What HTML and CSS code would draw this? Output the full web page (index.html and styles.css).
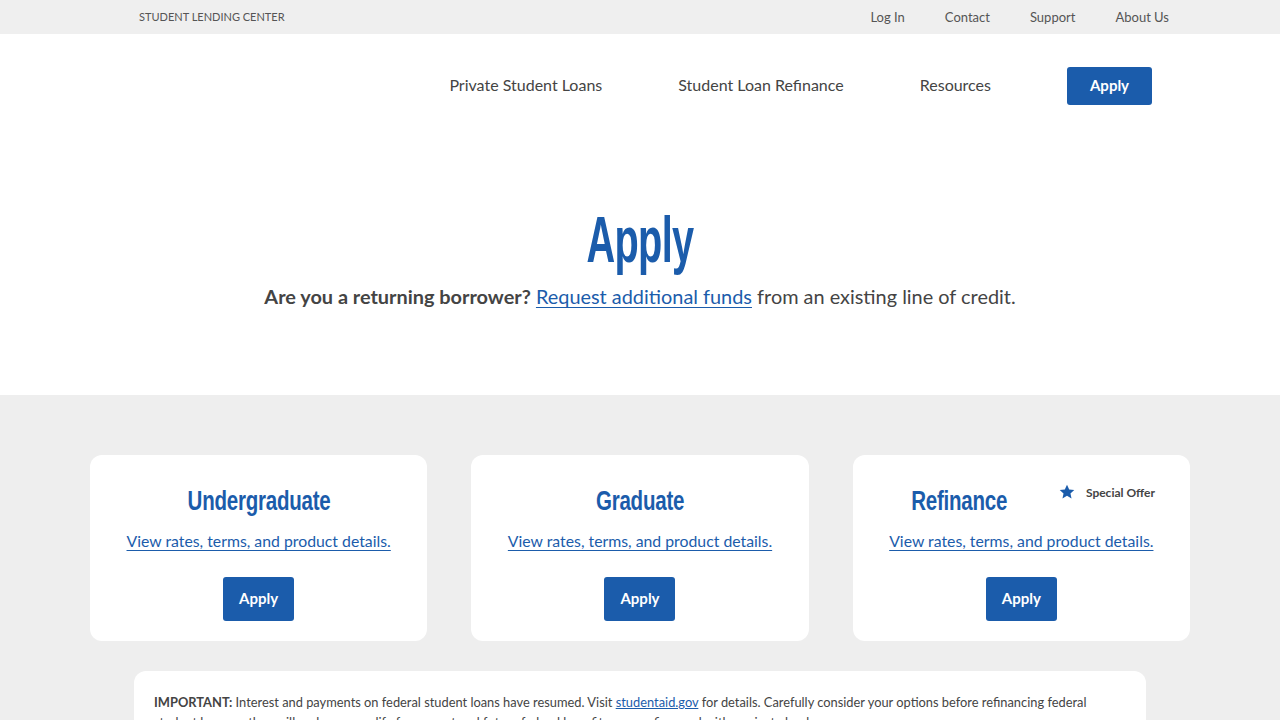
FILE: index.html
```html
<!DOCTYPE html>
<html lang="en">
<head>
<meta charset="utf-8">
<title>Apply | Student Lending Center</title>
<link rel="stylesheet" href="styles.css">
</head>
<body>
<div class="topbar">
  <div class="topbar-inner">
    <span class="brand">STUDENT LENDING CENTER</span>
    <nav class="util">
      <a href="#">Log In</a>
      <a href="#">Contact</a>
      <a href="#">Support</a>
      <a href="#">About Us</a>
    </nav>
  </div>
</div>
<header class="mainnav">
  <nav class="mainnav-inner">
    <a class="navlink" href="#">Private Student Loans</a>
    <a class="navlink" href="#">Student Loan Refinance</a>
    <a class="navlink" href="#">Resources</a>
    <a class="btn btn-nav" href="#">Apply</a>
  </nav>
</header>
<section class="hero">
  <h1>Apply</h1>
  <p class="sub"><strong>Are you a returning borrower?</strong> <a href="#">Request additional funds</a> from an existing line of credit.</p>
</section>
<section class="products">
  <div class="cards">
    <div class="card">
      <h2>Undergraduate</h2>
      <a class="details" href="#">View rates, terms, and product details.</a>
      <a class="btn btn-card" href="#">Apply</a>
    </div>
    <div class="card">
      <h2>Graduate</h2>
      <a class="details" href="#">View rates, terms, and product details.</a>
      <a class="btn btn-card" href="#">Apply</a>
    </div>
    <div class="card">
      <span class="offer"><svg class="star" viewBox="0 0 24 24" width="16" height="16"><path d="M12 1.2l3.3 7 7.6.8-5.7 5.2 1.6 7.5L12 17.8l-6.8 3.9 1.6-7.5L1.1 9l7.6-.8z" fill="#1b5cab"/></svg>Special Offer</span>
      <h2 class="shift">Refinance</h2>
      <a class="details" href="#">View rates, terms, and product details.</a>
      <a class="btn btn-card" href="#">Apply</a>
    </div>
  </div>
  <div class="notice">
    <p><strong>IMPORTANT:</strong> Interest and payments on federal student loans have resumed. Visit <a href="#">studentaid.gov</a> for details. Carefully consider your options before refinancing federal student loans as they will no longer qualify for current and future federal benefits once refinanced with a private lender.</p>
  </div>
</section>
</body>
</html>
```
FILE: styles.css
```css
* { box-sizing: border-box; }
html, body { margin: 0; padding: 0; }
body {
  font-family: "Lato", "Open Sans", sans-serif;
  color: #444;
  background: #fff;
}
a { color: inherit; text-decoration: none; }

.topbar { background: #efefef; height: 34px; }
.topbar-inner {
  height: 34px;
  padding: 0 111px 0 139px;
  display: flex;
  align-items: center;
  justify-content: space-between;
}
.brand { font-size: 11px; color: #555; margin-top: -2px; }
.util { display: flex; gap: 40px; }
.util a { font-size: 13px; color: #555; }

.mainnav { height: 104px; }
.mainnav-inner {
  display: flex;
  justify-content: flex-end;
  align-items: center;
  padding: 33px 128px 0 0;
}
.navlink { font-size: 16px; color: #444; margin-right: 76px; margin-top: -4px; }

.btn {
  display: inline-flex;
  align-items: center;
  justify-content: center;
  background: #1b5cab;
  color: #fff;
  font-weight: 700;
  border-radius: 3px;
}
.btn-nav { width: 85px; height: 38px; font-size: 15px; padding-bottom: 3px; }

.hero { text-align: center; padding: 64px 0 85px; }
.hero h1 {
  margin: 0;
  font-family: "Liberation Sans", "Arimo", sans-serif;
  font-size: 64px;
  line-height: 76px;
  font-weight: 700;
  letter-spacing: -1px;
  color: #1b5cab;
  transform: scaleX(0.62);
}
.sub { margin: 4px 0 0; font-size: 19.9px; line-height: 28px; color: #444; }
.sub strong { font-weight: 700; }
.sub a { color: #1b5cab; text-decoration: underline; text-underline-offset: 3px; text-decoration-thickness: 1px; }

.products { background: #eee; padding: 60px 90px 0; }
.cards { display: flex; gap: 44px; }
.card {
  position: relative;
  flex: 1;
  background: #fff;
  border-radius: 12px;
  height: 186px;
  display: flex;
  flex-direction: column;
  align-items: center;
  padding-top: 29px;
}
.card h2 {
  margin: 0;
  font-family: "Liberation Sans", "Arimo", sans-serif;
  font-size: 27px;
  line-height: 34px;
  font-weight: 700;
  letter-spacing: -0.3px;
  color: #1b5cab;
  transform: scaleX(0.76);
}
.card h2.shift { margin-right: 124px; }
.details {
  margin-top: 12px;
  font-size: 15.8px;
  line-height: 22px;
  color: #1b5cab;
  text-decoration: underline;
  text-underline-offset: 3px;
  text-decoration-thickness: 1px;
}
.btn-card { margin-top: 25px; width: 71px; height: 44px; font-size: 15px; padding-bottom: 2px; }
.offer {
  position: absolute;
  top: 29px;
  right: 35px;
  display: flex;
  align-items: center;
  gap: 11px;
  font-size: 12px;
  font-weight: 700;
  color: #444;
}

.notice {
  margin: 30px 44px 0;
  background: #fff;
  border-radius: 12px;
  padding: 21px 20px 20px;
}
.notice p { margin: 0; font-size: 12.85px; line-height: 20px; color: #444; }
.notice a { color: #1b5cab; text-decoration: underline; }
```
